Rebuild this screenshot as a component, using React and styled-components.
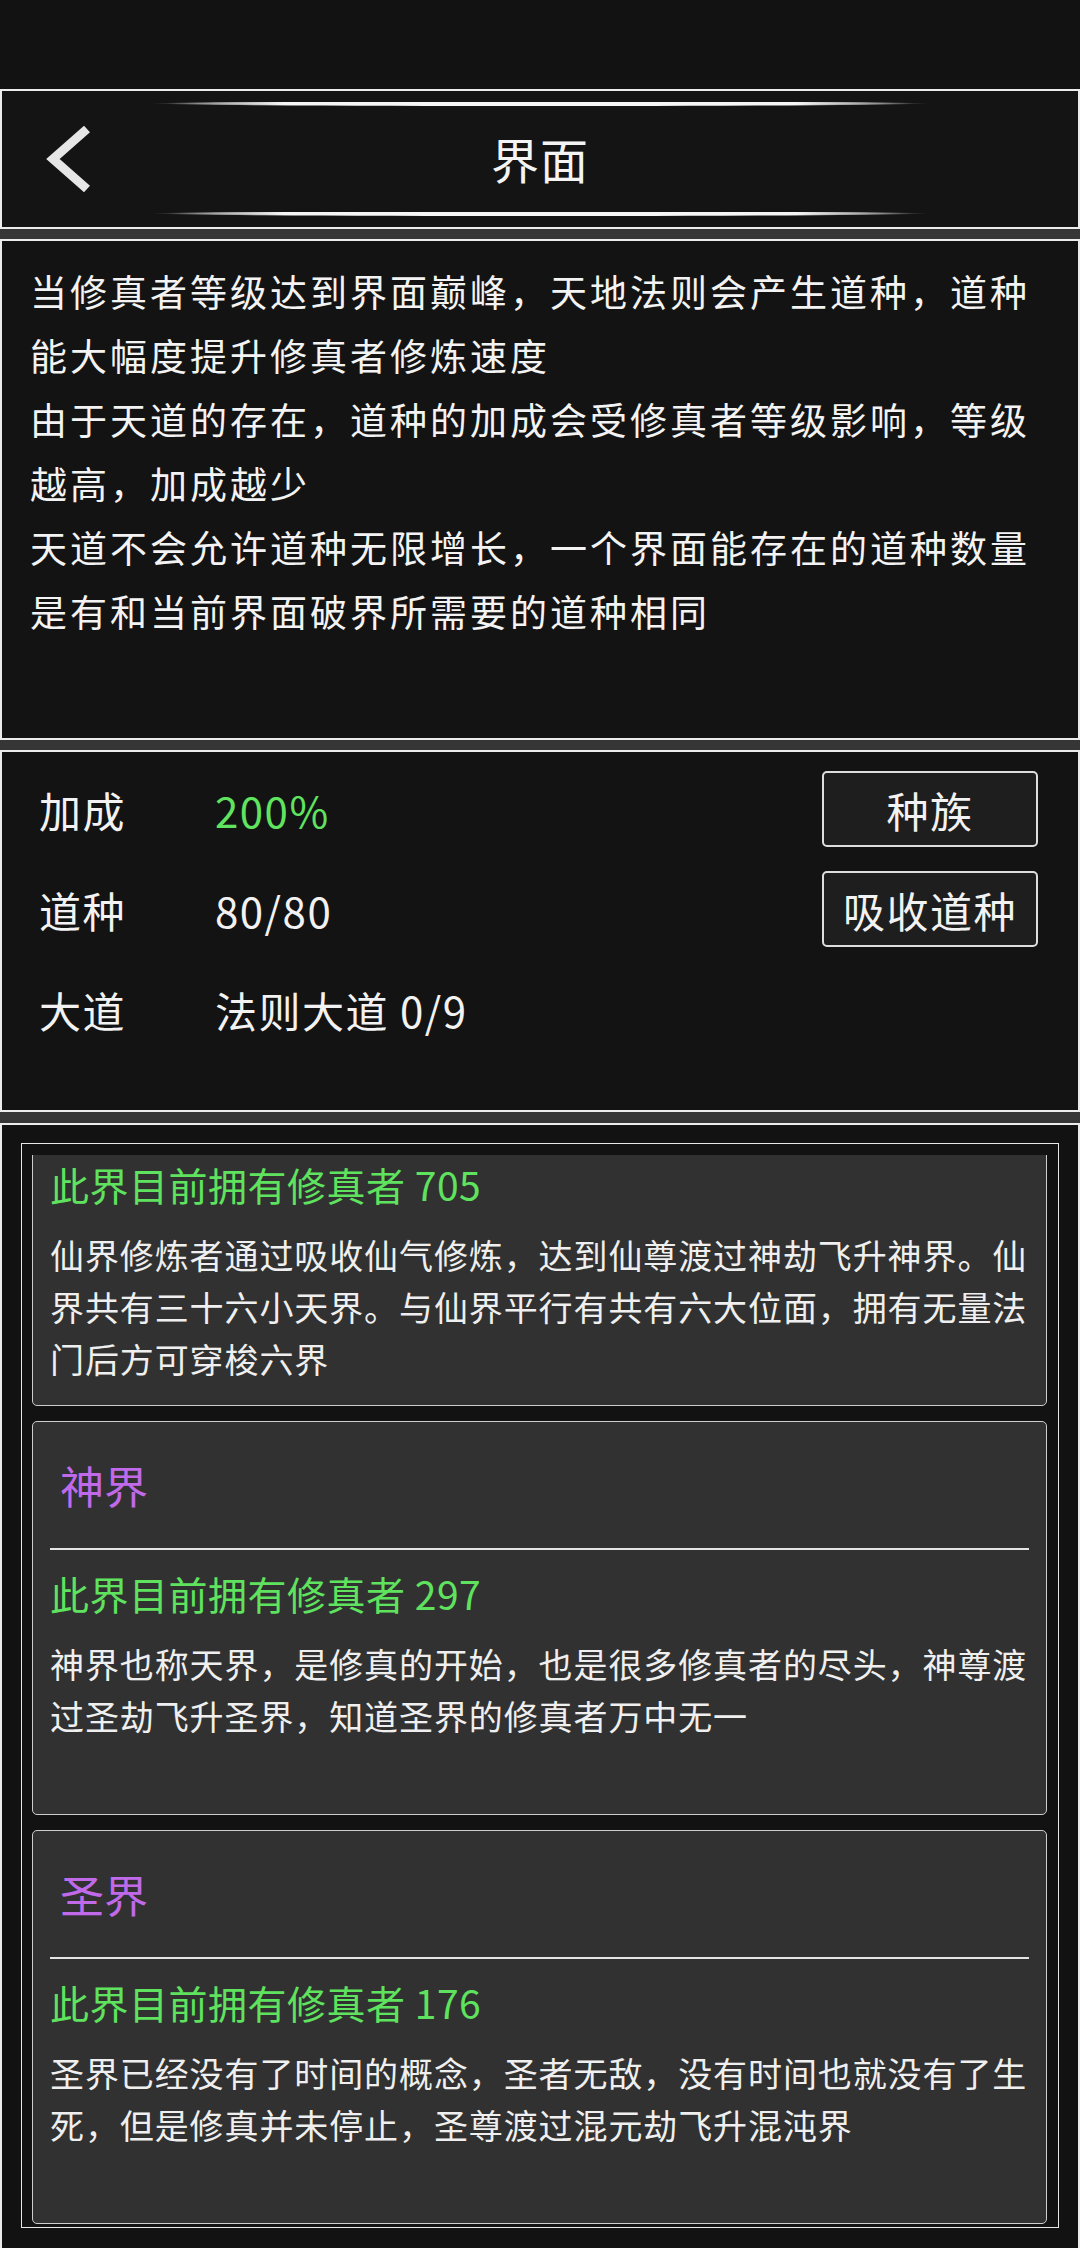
import React from "react";
import styled, { createGlobalStyle } from "styled-components";

const GlobalStyle = createGlobalStyle`
  html, body {
    margin: 0;
    padding: 0;
    background: #121212;
  }
  body {
    font-family: "Noto Sans CJK SC", "Noto Sans", sans-serif;
    color: #f2f2f2;
  }
`;

const Page = styled.div`
  width: 1080px;
  height: 2248px;
  display: flex;
  flex-direction: column;
  overflow: hidden;
  background: #121212;
`;

const TopBar = styled.div`
  flex: none;
  height: 89px;
  background: #121212;
`;

const Panel = styled.section`
  flex: none;
  box-sizing: border-box;
  border: 2px solid #ececec;
  background: #131313;
`;

const Strip = styled.div`
  flex: none;
  height: ${(p) => p.$h || 10}px;
  background: #363636;
`;

/* header */

const Header = styled(Panel)`
  height: 140px;
  padding: 10px 0 11px;
  display: flex;
  flex-direction: column;
  background: #141414;
`;

const GlowLine = styled.div`
  flex: none;
  align-self: center;
  width: 778px;
  height: 5px;
  background:
    linear-gradient(90deg, transparent 2%, rgba(244, 244, 244, 0.6) 10%, #f6f6f6 17%, #f6f6f6 83%, rgba(244, 244, 244, 0.6) 90%, transparent 98%) center / 100% 4px no-repeat,
    linear-gradient(90deg, transparent, #5c5c5c 6%, #6a6a6a 50%, #5c5c5c 94%, transparent) center / 100% 1px no-repeat;
  border-radius: 50%;
`;

const TitleRow = styled.div`
  flex: 1;
  display: grid;
  grid-template-columns: 1fr auto 1fr;
  align-items: center;
`;

const BackButton = styled.button`
  justify-self: start;
  margin-left: 41px;
  padding: 0;
  border: none;
  background: none;
  width: 50px;
  height: 70px;
  display: flex;
  cursor: pointer;
`;

const Title = styled.h1`
  margin: 0 0 2px;
  font-size: 48px;
  font-weight: 400;
  line-height: 1;
  letter-spacing: 1px;
  color: #f4f4f4;
`;

/* intro */

const Intro = styled(Panel)`
  height: 501px;
  padding: 18px 28px 0;
`;

const Paragraph = styled.p`
  margin: 0;
  font-size: 37px;
  line-height: 64px;
  letter-spacing: 3px;
  color: #f3f3f3;
`;

/* stats */

const Stats = styled(Panel)`
  height: 362px;
  padding: 7px 40px 0 37px;
`;

const StatRow = styled.div`
  display: grid;
  grid-template-columns: 176px 1fr auto;
  align-items: center;
  height: 100px;
  font-size: 42px;
  letter-spacing: 1.5px;
`;

const StatLabel = styled.span`
  color: #f2f2f2;
`;

const StatValue = styled.span`
  color: ${(p) => p.$color || "#f2f2f2"};
`;

const ActionButton = styled.button`
  box-sizing: border-box;
  width: 216px;
  height: 76px;
  padding: 0;
  border: 2px solid #dedede;
  border-radius: 5px;
  background: #1e1e1e;
  color: #f2f2f2;
  font-family: inherit;
  font-size: 42px;
  letter-spacing: 1.5px;
  display: flex;
  align-items: center;
  justify-content: center;
  cursor: pointer;
`;

/* realm list */

const ListPanel = styled(Panel)`
  flex: 1;
  min-height: 0;
  border-bottom: none;
  padding: 18px 19px 20px;
  display: flex;
  flex-direction: column;
  background: #121212;
`;

const Frame = styled.div`
  flex: 1;
  min-height: 0;
  border: 1px solid #e8e8e8;
  padding: 11px 11px 2px 10px;
  display: flex;
  flex-direction: column;
`;

const Viewport = styled.div`
  flex: 1;
  min-height: 0;
  overflow: hidden;
`;

/* list is scrolled: first card's head sits above the visible area */
const Track = styled.div`
  display: flex;
  flex-direction: column;
  gap: 15px;
  margin-top: -143px;
`;

const Card = styled.article`
  border: 1px solid #cdcdcd;
  border-radius: 5px;
  background: #313131;
  padding: 0 16px 20px;
`;

const CardHead = styled.h2`
  margin: 0;
  height: 126px;
  display: flex;
  align-items: center;
  padding-left: 11px;
  font-size: 44px;
  font-weight: 400;
  line-height: 1;
  color: #c06aea;
`;

const Rule = styled.div`
  height: 2px;
  margin: 0 1px;
  background: #e4e4e4;
`;

const Count = styled.div`
  margin-top: 19px;
  padding-left: 1px;
  font-size: 39px;
  line-height: 48px;
  letter-spacing: 0.5px;
  color: #5fe35f;
`;

const CardText = styled.p`
  margin: 21px 0 0;
  min-height: 156px;
  padding-left: 1px;
  font-size: 34px;
  line-height: 52px;
  letter-spacing: 0.9px;
  color: #efefef;
`;

const intro = [
  "当修真者等级达到界面巅峰，天地法则会产生道种，道种能大幅度提升修真者修炼速度",
  "由于天道的存在，道种的加成会受修真者等级影响，等级越高，加成越少",
  "天道不会允许道种无限增长，一个界面能存在的道种数量是有和当前界面破界所需要的道种相同",
];

const stats = [
  { label: "加成", value: "200%", color: "#60e460", action: "种族" },
  { label: "道种", value: "80/80", action: "吸收道种" },
  { label: "大道", value: "法则大道 0/9" },
];

const realms = [
  {
    name: "仙界",
    count: 705,
    text: "仙界修炼者通过吸收仙气修炼，达到仙尊渡过神劫飞升神界。仙界共有三十六小天界。与仙界平行有共有六大位面，拥有无量法门后方可穿梭六界",
  },
  {
    name: "神界",
    count: 297,
    text: "神界也称天界，是修真的开始，也是很多修真者的尽头，神尊渡过圣劫飞升圣界，知道圣界的修真者万中无一",
  },
  {
    name: "圣界",
    count: 176,
    text: "圣界已经没有了时间的概念，圣者无敌，没有时间也就没有了生死，但是修真并未停止，圣尊渡过混元劫飞升混沌界",
  },
];

const BackIcon = () => (
  <svg width="50" height="70" viewBox="0 0 50 70">
    <polyline
      points="44,5 10,35 44,65"
      fill="none"
      stroke="#e6e6e6"
      strokeWidth="9"
      strokeLinecap="butt"
      strokeLinejoin="miter"
    />
  </svg>
);

const App = () => {
  return (
    <Page>
      <GlobalStyle />
      <TopBar />

      <Header>
        <GlowLine />
        <TitleRow>
          <BackButton aria-label="返回">
            <BackIcon />
          </BackButton>
          <Title>界面</Title>
          <span />
        </TitleRow>
        <GlowLine />
      </Header>
      <Strip />

      <Intro>
        {intro.map((t) => (
          <Paragraph key={t}>{t}</Paragraph>
        ))}
      </Intro>
      <Strip />

      <Stats>
        {stats.map((s) => (
          <StatRow key={s.label}>
            <StatLabel>{s.label}</StatLabel>
            <StatValue $color={s.color}>{s.value}</StatValue>
            {s.action ? <ActionButton>{s.action}</ActionButton> : <span />}
          </StatRow>
        ))}
      </Stats>
      <Strip $h={11} />

      <ListPanel>
        <Frame>
          <Viewport>
            <Track>
              {realms.map((r) => (
                <Card key={r.name}>
                  <CardHead>{r.name}</CardHead>
                  <Rule />
                  <Count>此界目前拥有修真者 {r.count}</Count>
                  <CardText>{r.text}</CardText>
                </Card>
              ))}
            </Track>
          </Viewport>
        </Frame>
      </ListPanel>
    </Page>
  );
};

export default App;
